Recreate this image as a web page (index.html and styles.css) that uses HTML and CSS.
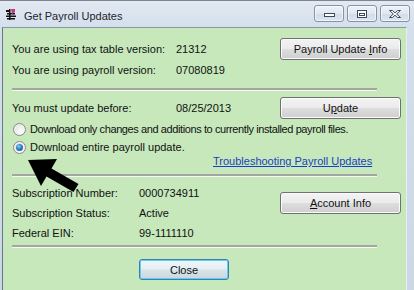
FILE: index.html
```html
<!DOCTYPE html>
<html>
<head>
<meta charset="utf-8">
<link rel="stylesheet" href="styles.css">
</head>
<body>
<div class="window">
  <div class="titlebar">
    <svg class="app-icon" width="10" height="12" viewBox="0 0 10 12">
      <rect x="0" y="1" width="4" height="2" fill="#111"/>
      <rect x="1" y="4" width="8" height="1.5" fill="#111"/>
      <rect x="0" y="6.5" width="10" height="1.5" fill="#111"/>
      <rect x="1" y="9" width="8" height="1.5" fill="#111"/>
      <rect x="3" y="0" width="1.5" height="11" fill="#111"/>
      <path d="M5 0 L9 0 L9 3 L6 5 Z" fill="#d0308a"/>
    </svg>
    <span class="title">Get Payroll Updates</span>
    <div class="caption-buttons">
      <span class="cbtn">
        <svg width="28" height="15" viewBox="0 0 28 15"><rect x="9.5" y="7.5" width="10" height="3" fill="#fff" stroke="#3b4a5e"/></svg>
      </span>
      <span class="cbtn">
        <svg width="28" height="15" viewBox="0 0 28 15"><rect x="9.5" y="4.5" width="9" height="7" fill="#fff" stroke="#3b4a5e"/><rect x="11.5" y="7.5" width="5" height="2" fill="#fff" stroke="#3b4a5e"/></svg>
      </span>
      <span class="cbtn">
        <svg width="28" height="15" viewBox="0 0 28 15"><path d="M8.5 4.5 L11.5 4.5 L14 6.8 L16.5 4.5 L19.5 4.5 L15.6 8 L19.5 11.5 L16.5 11.5 L14 9.2 L11.5 11.5 L8.5 11.5 L12.4 8 Z" fill="#fff" stroke="#3b4a5e" stroke-linejoin="round"/></svg>
      </span>
    </div>
  </div>
  <div class="client">
    <div class="row row-btn">
      <span class="label">You are using tax table version:</span>
      <span class="value">21312</span>
      <button class="btn">Payroll Update <u>I</u>nfo</button>
    </div>
    <div class="row row-plain">
      <span class="label">You are using payroll version:</span>
      <span class="value">07080819</span>
    </div>
    <div class="sep sep-1"></div>
    <div class="row row-btn row-update">
      <span class="label">You must update before:</span>
      <span class="value">08/25/2013</span>
      <button class="btn">U<u>p</u>date</button>
    </div>
    <div class="radio-row radio-row-1">
      <span class="radio"></span>
      <span class="radio-text radio-text-long">Download only changes and additions to currently installed payroll files.</span>
    </div>
    <div class="radio-row radio-row-2">
      <span class="radio checked"></span>
      <span class="radio-text">Download entire payroll update.</span>
    </div>
    <div class="link-row"><a class="link" href="#">Troubleshooting Payroll Updates</a></div>
    <div class="sep sep-2"></div>
    <div class="sub-grid">
      <span class="sub-label">Subscription Number:</span>
      <span class="sub-value">0000734911</span>
      <button class="btn sub-btn"><u>A</u>ccount Info</button>
      <span class="sub-label">Subscription Status:</span>
      <span class="sub-value">Active</span>
      <span class="sub-label">Federal EIN:</span>
      <span class="sub-value">99-1111110</span>
    </div>
    <div class="sep sep-3"></div>
    <div class="close-row"><button class="btn btn-default">Close</button></div>
  </div>
  <svg class="arrow" width="414" height="290" viewBox="0 0 414 290">
    <polygon points="28,160 57,159 51.5,168.5 78.5,184 73.5,192 46.5,176.5 41,186" fill="#000"/>
  </svg>
</div>
</body>
</html>
```

FILE: styles.css
```css
html, body {
  margin: 0;
  padding: 0;
}
body {
  width: 414px;
  height: 290px;
  overflow: hidden;
  font-family: "Liberation Sans", Arial, sans-serif;
  font-size: 11px;
  color: #111;
  background: #d3dee9;
}
.window {
  position: relative;
  height: 290px;
  display: flex;
  flex-direction: column;
  background: linear-gradient(to bottom, #e2e9f2 0px, #d3dfec 27px, #cbd7e5 290px);
  border-top: 1px solid #7d858e;
  box-sizing: border-box;
}
.titlebar {
  height: 26px;
  display: flex;
  align-items: center;
  padding-left: 6px;
  box-sizing: border-box;
}
.app-icon {
  display: block;
  margin-top: 2px;
}
.title {
  margin-left: 8px;
  color: #1e2630;
  font-size: 11px;
  margin-top: 3px;
}
.caption-buttons {
  margin-left: auto;
  display: flex;
  gap: 3px;
  align-self: flex-start;
  margin-top: 4px;
  margin-right: 4px;
}
.cbtn {
  width: 28px;
  height: 15px;
  border: 1px solid #8593a7;
  border-radius: 3px;
  background: linear-gradient(to bottom, #eef3f9 0%, #dfe7f1 50%, #d2dce8 51%, #dbe4ee 100%);
  box-shadow: inset 0 0 0 1px rgba(255,255,255,0.6);
  display: block;
}
.cbtn svg {
  display: block;
}
.client {
  flex: 1;
  margin: 0 7px 0 2px;
  border-left: 1px solid #687686;
  border-top: 1px solid #8b97a5;
  border-right: 1px solid #e9eef4;
  background: #c6e8bb;
  padding: 10px 5px 0 9px;
  display: flex;
  flex-direction: column;
}
.row {
  display: flex;
  align-items: center;
}
.row-btn {
  height: 22px;
}
.row-plain {
  height: 20px;
}
.row-update {
  margin-top: 6px;
}
.label {
  width: 164px;
  flex: none;
}
.value {
  flex: 1;
}
.btn {
  font-family: "Liberation Sans", Arial, sans-serif;
  font-size: 11px;
  color: #111;
  width: 121px;
  height: 22px;
  padding: 0;
  border: 1px solid #707070;
  border-radius: 3px;
  background: linear-gradient(to bottom, #f3f3f3 0%, #ebebeb 48%, #dddddd 52%, #cfcfcf 100%);
  box-shadow: inset 0 0 0 1px #fbfbfb;
  flex: none;
}
.btn u {
  text-decoration: underline;
}
.sep {
  width: 365px;
  height: 2px;
  background: #a3a6a3;
  border-bottom: 1px solid #f4f9f2;
  flex: none;
}
.sep-1 {
  margin-top: 8px;
}
.sep-2 {
  margin-top: 7px;
}
.sep-3 {
  margin-top: 2px;
}
.radio-row {
  display: flex;
  align-items: center;
}
.radio-row-1 {
  height: 20px;
}
.radio-row-2 {
  height: 16px;
}
.radio {
  width: 11px;
  height: 11px;
  margin-left: 1px;
  border: 1px solid #8a8c8c;
  border-radius: 50%;
  background: radial-gradient(circle at 60% 65%, #ffffff 0%, #f0f0f0 40%, #d3d3d3 100%);
  box-shadow: inset 0 0 0 1px #f4f4f4;
  position: relative;
  flex: none;
}
.radio.checked::after {
  content: "";
  position: absolute;
  left: 2px;
  top: 2px;
  width: 7px;
  height: 7px;
  border-radius: 50%;
  background: radial-gradient(circle at 40% 35%, #8ad0f7 0%, #2f7fc4 45%, #154a86 100%);
}
.radio-text {
  margin-left: 4px;
}
.radio-text-long {
  letter-spacing: -0.4px;
}
.link-row {
  height: 12px;
  display: flex;
  align-items: center;
  padding-left: 201px;
}
.link {
  color: #1b3fc0;
  text-decoration: underline;
}
.sub-grid {
  margin-top: 6px;
  display: grid;
  grid-template-columns: 127px 1fr 121px;
  grid-template-rows: 20px 20px 20px;
  align-items: center;
}
.sub-label {
  grid-column: 1;
}
.sub-value {
  grid-column: 2;
}
.sub-btn {
  grid-column: 3;
  grid-row: 1 / 3;
  align-self: center;
}
.close-row {
  margin-top: 11px;
  padding-left: 127px;
}
.btn-default {
  width: 90px;
  height: 21px;
  border-color: #3a7fb0;
  box-shadow: inset 0 0 0 1px #5fd0f3;
  background: linear-gradient(to bottom, #f0f6f9 0%, #e6eef2 48%, #d9e3e8 52%, #cbd8de 100%);
}
.arrow {
  position: absolute;
  left: 0;
  top: -1px;
  pointer-events: none;
}
```
